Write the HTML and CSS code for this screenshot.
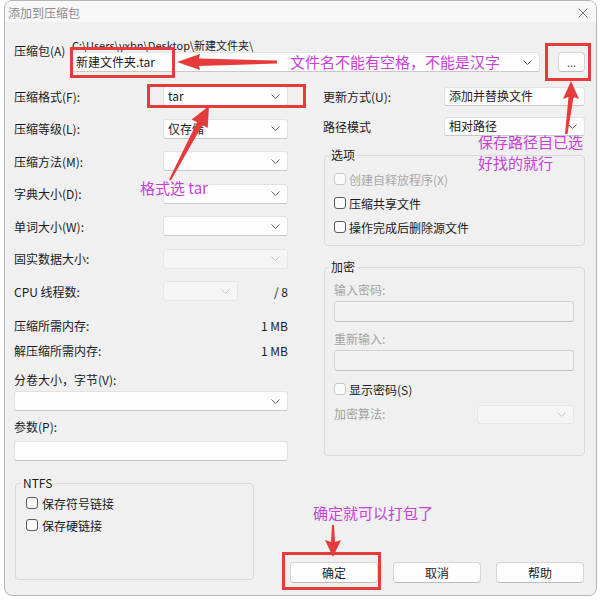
FILE: index.html
```html
<!DOCTYPE html>
<html lang="zh-CN">
<head>
<meta charset="utf-8">
<title>添加到压缩包</title>
<link rel="stylesheet" href="styles.css">
</head>
<body>
<div class="window">
  <div class="titlebar">
    <span class="title">添加到压缩包</span>
    <svg class="close" viewBox="0 0 10 10"><path d="M0.5 0.5L9.5 9.5M9.5 0.5L0.5 9.5"/></svg>
  </div>
  <div class="content">
    <div class="archive">
      <div class="archive-label">压缩包(A)</div>
      <div class="archive-main">
        <div class="path">C:\Users\yxbn\Desktop\新建文件夹\</div>
        <div class="archive-line">
          <div class="combo combo-archive"><span>新建文件夹.tar</span><svg class="chev" viewBox="0 0 9 5"><polyline points="0.5,0.5 4.5,4.5 8.5,0.5"/></svg></div>
          <button class="btn btn-browse">...</button>
        </div>
      </div>
    </div>

    <div class="columns">
      <div class="col-left">
        <div class="opt-row"><span>压缩格式(F):</span><div class="combo"><span>tar</span><svg class="chev" viewBox="0 0 9 5"><polyline points="0.5,0.5 4.5,4.5 8.5,0.5"/></svg></div></div>
        <div class="opt-row"><span>压缩等级(L):</span><div class="combo"><span>仅存储</span><svg class="chev" viewBox="0 0 9 5"><polyline points="0.5,0.5 4.5,4.5 8.5,0.5"/></svg></div></div>
        <div class="opt-row"><span>压缩方法(M):</span><div class="combo"><span></span><svg class="chev" viewBox="0 0 9 5"><polyline points="0.5,0.5 4.5,4.5 8.5,0.5"/></svg></div></div>
        <div class="opt-row"><span>字典大小(D):</span><div class="combo"><span></span><svg class="chev" viewBox="0 0 9 5"><polyline points="0.5,0.5 4.5,4.5 8.5,0.5"/></svg></div></div>
        <div class="opt-row"><span>单词大小(W):</span><div class="combo"><span></span><svg class="chev" viewBox="0 0 9 5"><polyline points="0.5,0.5 4.5,4.5 8.5,0.5"/></svg></div></div>
        <div class="opt-row"><span>固实数据大小:</span><div class="combo dis"><span></span><svg class="chev" viewBox="0 0 9 5"><polyline points="0.5,0.5 4.5,4.5 8.5,0.5"/></svg></div></div>
        <div class="opt-row cpu"><span>CPU 线程数:</span><div class="combo dis"><span></span><svg class="chev" viewBox="0 0 9 5"><polyline points="0.5,0.5 4.5,4.5 8.5,0.5"/></svg></div><span class="threads">/ 8</span></div>

        <div class="info-list">
          <div class="info-row"><span>压缩所需内存:</span><span>1 MB</span></div>
          <div class="info-row"><span>解压缩所需内存:</span><span>1 MB</span></div>
        </div>

        <div class="field-label vol">分卷大小，字节(V):</div>
        <div class="combo wide"><span></span><svg class="chev" viewBox="0 0 9 5"><polyline points="0.5,0.5 4.5,4.5 8.5,0.5"/></svg></div>
        <div class="field-label param">参数(P):</div>
        <div class="textbox"></div>
      </div>

      <div class="col-right">
        <div class="right-top">
          <div class="opt-row r"><span>更新方式(U):</span><div class="combo"><span>添加并替换文件</span><svg class="chev" viewBox="0 0 9 5"><polyline points="0.5,0.5 4.5,4.5 8.5,0.5"/></svg></div></div>
          <div class="opt-row r"><span>路径模式</span><div class="combo"><span>相对路径</span><svg class="chev" viewBox="0 0 9 5"><polyline points="0.5,0.5 4.5,4.5 8.5,0.5"/></svg></div></div>
        </div>

        <div class="group g-options">
          <div class="group-title">选项</div>
          <div class="check-list">
            <div class="check disabled"><span class="box"></span>创建自释放程序(X)</div>
            <div class="check"><span class="box"></span>压缩共享文件</div>
            <div class="check"><span class="box"></span>操作完成后删除源文件</div>
          </div>
        </div>

        <div class="group g-enc">
          <div class="group-title">加密</div>
          <div class="enc-body">
            <div class="enc-label first">输入密码:</div>
            <div class="textbox dis"></div>
            <div class="enc-label second">重新输入:</div>
            <div class="textbox dis"></div>
            <div class="check show"><span class="box light"></span>显示密码(S)</div>
            <div class="enc-alg"><span class="enc-label">加密算法:</span><div class="combo dis small"><span></span><svg class="chev" viewBox="0 0 9 5"><polyline points="0.5,0.5 4.5,4.5 8.5,0.5"/></svg></div></div>
          </div>
        </div>
      </div>
    </div>

    <div class="bottom">
      <div class="group g-ntfs">
        <div class="group-title">NTFS</div>
        <div class="ntfs-list">
          <div class="check ntfs"><span class="box"></span>保存符号链接</div>
          <div class="check ntfs"><span class="box"></span>保存硬链接</div>
        </div>
      </div>
      <div class="buttons">
        <button class="btn">确定</button>
        <button class="btn">取消</button>
        <button class="btn">帮助</button>
      </div>
    </div>
  </div>
</div>

<svg class="marks" width="600" height="600" viewBox="0 0 600 600">
  <g fill="none" stroke="#e63b3b" stroke-width="3">
    <rect x="71.5" y="48.5" width="102" height="28"/>
    <rect x="148.5" y="85.5" width="156" height="21"/>
    <rect x="546.5" y="44.5" width="43" height="35"/>
    <rect x="283.5" y="553.5" width="96" height="35"/>
  </g>
  <g fill="#e63b3b">
    <polygon points="177,62 200,54 199,58.5 277,60.5 277,63.5 199,66 200,70"/>
    <polygon points="571,81 579,99 573.5,97 567.5,134 565,134 568.5,97 563,99"/>
    <polygon points="209,106 207.7,127.9 202.4,125.1 170.9,180.5 169.1,179.5 197,122.3 191.7,119.5"/>
    <polygon points="333,557 341,540 335,542 334,525 332,525 331,542 325,540"/>
  </g>
</svg>

<div class="note n-name">文件名不能有空格，不能是汉字</div>
<div class="note n-path"><div class="path-line">保存路径自已选</div><div class="path-line second">好找的就行</div></div>
<div class="note n-fmt">格式选 tar</div>
<div class="note n-ok">确定就可以打包了</div>
</body>
</html>
```

FILE: styles.css
```css
body {
  margin: 0;
  background: #ffffff;
  font-family: "Noto Sans CJK SC", "Noto Sans", sans-serif;
  font-size: 12px;
  color: #1b1b1b;
}

.window {
  box-sizing: border-box;
  width: 593px;
  height: 596px;
  margin-left: 4px;
  border: 1px solid #b5b5b5;
  border-radius: 8px;
  background: #f0f0f0;
  overflow: hidden;
}

.titlebar {
  height: 19px;
  padding: 2px 8px 0 3px;
  background: #f8f8f8;
  display: flex;
  align-items: center;
  justify-content: space-between;
}

.title {
  color: #8c8c8c;
  line-height: 14px;
}

.close {
  width: 10px;
  height: 10px;
  fill: none;
  stroke: #7c7c7c;
  stroke-width: 1;
}

.content {
  padding: 0 11px 0 9px;
}

/* archive row */
.archive {
  display: flex;
  margin-top: 16px;
}

.archive-label {
  width: 56px;
  margin-top: 6px;
  line-height: 14px;
}

.archive-main {
  flex: 1;
}

.path {
  font-size: 11px;
  line-height: 14px;
  padding-left: 2px;
  color: #222;
}

.archive-line {
  display: flex;
  gap: 18px;
}

.combo-archive {
  width: 470px;
}

.combo-archive span {
  padding-left: 1px;
}

/* combos */
.combo {
  box-sizing: border-box;
  height: 20px;
  display: flex;
  align-items: center;
  justify-content: space-between;
  padding: 0 7px 0 4px;
  background: #fdfdfd;
  border: 1px solid #e2e2e2;
  border-bottom-color: #c9c9c9;
  border-radius: 3px;
  line-height: 16px;
  white-space: nowrap;
}

.chev {
  width: 9px;
  height: 5px;
  flex: none;
  fill: none;
  stroke: #5e5e5e;
  stroke-width: 1;
}

.combo.dis {
  background: #f5f5f5;
  border-color: #e6e6e6;
}

.combo.dis .chev {
  stroke: #c4c4c4;
}

.combo.small {
  width: 97px;
  height: 19px;
}

/* buttons */
.btn {
  box-sizing: border-box;
  width: 88px;
  height: 21px;
  padding: 0;
  margin: 0;
  font-family: inherit;
  font-size: 12px;
  color: #1b1b1b;
  background: #fdfdfd;
  border: 1px solid #d6d6d6;
  border-bottom-color: #bdbdbd;
  border-radius: 4px;
  line-height: 16px;
}

.btn-browse {
  width: 27px;
  height: 20px;
  font-size: 11px;
  color: #444;
  line-height: 10px;
}

/* columns */
.columns {
  display: flex;
  gap: 35px;
  margin-top: 8px;
  align-items: flex-start;
}

.col-left {
  width: 274px;
}

.col-right {
  width: 262px;
}

.opt-row {
  display: grid;
  grid-template-columns: 149px 125px;
  align-items: center;
  height: 32.5px;
}

.opt-row.cpu {
  grid-template-columns: 149px 75px 1fr;
}

.threads {
  text-align: right;
}

.info-list {
  margin-top: 5px;
}

.info-row {
  display: flex;
  justify-content: space-between;
  align-items: center;
  height: 25px;
}

.field-label {
  line-height: 16px;
}

.field-label.vol {
  margin-top: 9.5px;
}

.combo.wide {
  margin-top: 3px;
}

.field-label.param {
  margin-top: 8px;
}

.textbox {
  box-sizing: border-box;
  height: 20px;
  margin-top: 6px;
  background: #fdfdfd;
  border: 1px solid #e2e2e2;
  border-bottom-color: #c4c4c4;
  border-radius: 3px;
}

/* right column */
.right-top {
  margin-top: 1px;
}

.opt-row.r {
  grid-template-columns: 121px 141px;
  height: 30px;
}

.opt-row.r .combo {
  height: 19px;
}

.group {
  box-sizing: border-box;
  margin-left: 1px;
  border: 1px solid #d9d9d9;
  border-radius: 4px;
}

.group-title {
  width: fit-content;
  margin: -8px 0 0 4px;
  padding: 0 2px;
  line-height: 14px;
  background: #f0f0f0;
}

.g-options {
  margin-top: 14px;
  height: 91px;
}

.check-list {
  padding: 5px 0 0 9px;
}

.check {
  display: flex;
  align-items: center;
  gap: 3px;
  height: 24px;
  white-space: nowrap;
}

.box {
  box-sizing: border-box;
  width: 12px;
  height: 12px;
  flex: none;
  border: 1px solid #5b5b5b;
  border-radius: 3px;
  background: #fbfbfb;
}

.check.disabled {
  color: #a9a9a9;
}

.check.disabled .box,
.box.light {
  border-color: #c8c8c8;
}

.g-enc {
  margin-top: 21px;
  height: 189px;
}

.enc-body {
  padding: 0 10px 0 9px;
}

.enc-label {
  color: #a3a3a3;
  line-height: 16px;
}

.enc-label.first {
  margin-top: 8px;
}

.enc-label.second {
  margin-top: 9px;
}

.textbox.dis {
  height: 21px;
  margin-top: 3px;
  background: #f3f3f3;
  border-color: #d2d2d2;
  border-bottom-color: #bdbdbd;
}

.check.show {
  margin-top: 10px;
  height: 16px;
}

.enc-alg {
  display: flex;
  justify-content: space-between;
  align-items: center;
  height: 20px;
  margin-top: 7px;
}

/* bottom */
.bottom {
  display: flex;
  align-items: flex-start;
  margin-top: 22px;
}

.g-ntfs {
  width: 239px;
  height: 97px;
}

.g-ntfs .group-title {
  margin-left: 5px;
}

.ntfs-list {
  padding: 2px 0 0 10px;
}

.check.ntfs {
  height: 22px;
  gap: 4px;
}

.buttons {
  display: flex;
  gap: 15px;
  margin: 79px 1px 0 auto;
}

/* annotations overlay */
.marks {
  position: absolute;
  left: 0;
  top: 0;
}

.note {
  position: absolute;
  color: #c83fda;
  font-size: 15px;
  line-height: 18px;
  white-space: nowrap;
}

.n-name {
  left: 290px;
  top: 53px;
}

.n-path {
  left: 478px;
  top: 135px;
}

.path-line {
  line-height: 14px;
}

.path-line.second {
  margin-top: 7px;
}

.n-fmt {
  left: 140px;
  top: 179px;
}

.n-ok {
  left: 313px;
  top: 504px;
}
```
